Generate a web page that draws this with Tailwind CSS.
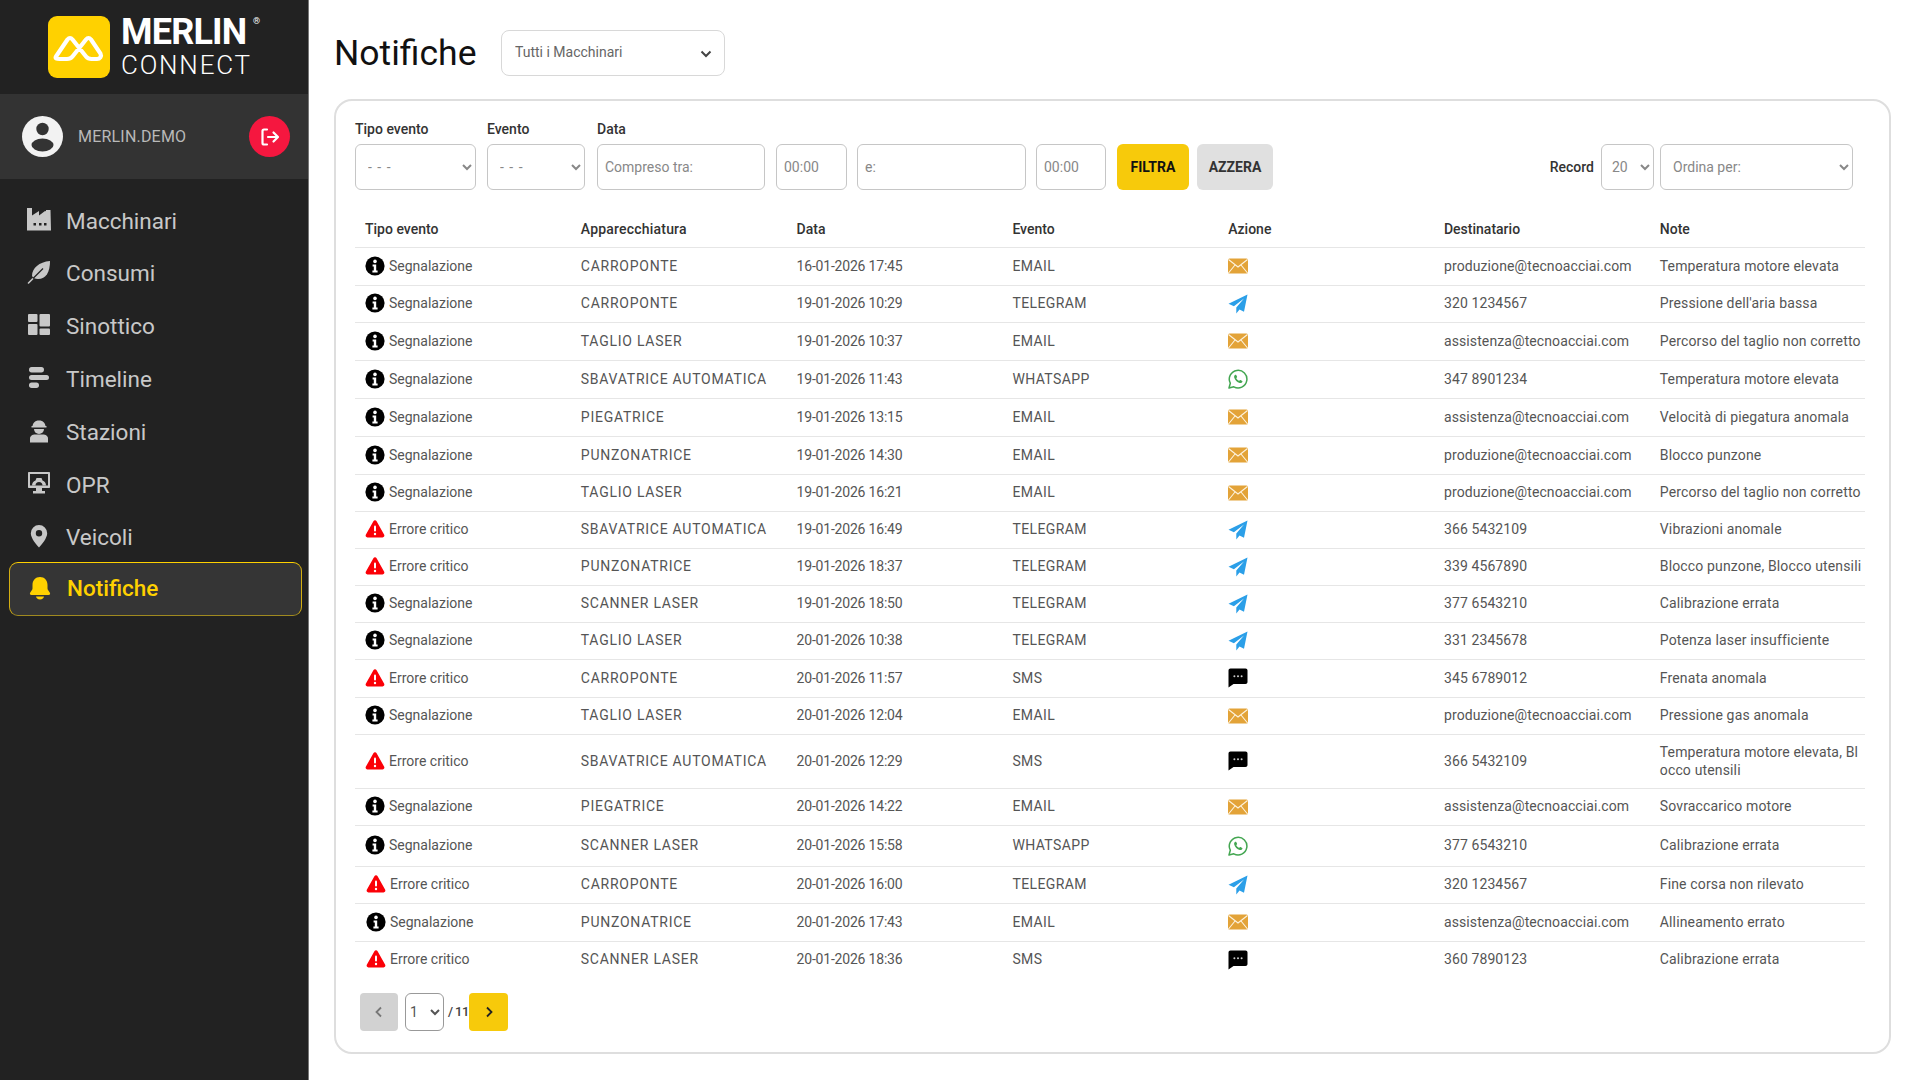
<!DOCTYPE html>
<html lang="it">
<head>
  <meta charset="UTF-8" />
  <title>Merlin Connect - Notifiche</title>
  <script src="https://cdn.jsdelivr.net/npm/@tailwindcss/browser@4"></script>
</head>
<body class="bg-white text-[#555] h-screen overflow-hidden flex font-['Roboto',sans-serif]">

  <!-- icone tabella -->
  <svg class="hidden">
    <symbol id="i-info" viewBox="0 0 20 20"><circle cx="10" cy="10" r="9.6" fill="#000"/><circle cx="10" cy="5.4" r="1.8" fill="#fff"/><path d="M7.6 8.4h3.6v6h1.4v2H7.4v-2h1.4v-4H7.6z" fill="#fff"/></symbol>
    <symbol id="i-alert" viewBox="0 0 20 20"><path d="M10 1.2c.7 0 1.3.4 1.6 1l7.6 13.6c.6 1.1-.2 2.6-1.6 2.6H2.4c-1.4 0-2.2-1.5-1.6-2.6L8.400 2.200c.3-.6.9-1 1.600-1z" fill="#fb0007"/><rect x="9" y="6.500" width="2" height="6" rx="1" fill="#fff"/><circle cx="10" cy="15" r="1.200" fill="#fff"/></symbol>
    <symbol id="i-mail" viewBox="0 0 20 20"><rect x="0" y="2.500" width="20" height="15" rx="1.500" fill="#e3a338"/><path d="M.5 3.500l9.500 7.500 9.500-7.500M.5 17l6.500-8M19.500 17l-6.500-8" fill="none" stroke="#fdf3df" stroke-width="1.100"/></symbol>
    <symbol id="i-tg" viewBox="0 0 20 20"><path d="M19.500 .5 .5 9.800l5.400 2.400L16 4.500 8.300 13.600v5.900l3.200-4.100 4.500 2.300z" fill="#2b9fe8"/></symbol>
    <symbol id="i-wa" viewBox="0 0 20 20"><path d="M1 19l1.300-4.800A8.800 8.800 0 1 1 5.800 17.800z" fill="none" stroke="#43a651" stroke-width="1.500" stroke-linejoin="round"/><path d="M7.300 5.800c-.9.500-1.400 1.500-1.100 2.700.6 2.500 3 4.900 5.500 5.500 1.200.3 2.300-.3 2.700-1.200.2-.4.100-.7-.2-.9l-1.700-.9c-.3-.1-.6 0-.8.200l-.6.700c-1.300-.5-2.300-1.500-2.900-2.800l.7-.7c.2-.2.300-.5.100-.8l-.8-1.700c-.2-.3-.6-.3-.9-.1z" fill="#43a651"/></symbol>
    <symbol id="i-sms" viewBox="0 0 20 20"><path d="M2.500 .5h15c1.200 0 2 .8 2 2v11.500c0 1.200-.8 2-2 2H5.500L.5 19.500V2.500c0-1.200.8-2 2-2z" fill="#000"/><circle cx="6.400" cy="8.300" r="1" fill="#ccc"/><circle cx="10" cy="8.300" r="1" fill="#ccc"/><circle cx="13.600" cy="8.300" r="1" fill="#ccc"/></symbol>
  </svg>

  <aside class="w-[309px] shrink-0 h-full bg-[#222222] border-r border-[#777] flex flex-col">
    <div class="h-[94px] flex items-center pl-[48px] gap-[11px]">
      <svg class="w-[62px] h-[62px] shrink-0" viewBox="0 0 62 62"><rect width="62" height="62" rx="9" fill="#ffd100"/><path d="M8 40.500 19.500 23.500q2.500-3 5 0L38 40.500q2 2.500 5.500 2.500H49c3 0 4.800-2.800 3.500-5.300L43 23.500q-2.500-3-5 0L24.500 40.500q-2 2.500-5.500 2.500h-7.500C8.500 43 6.800 42.500 8 40.500z" fill="none" stroke="#fff" stroke-width="4.200" stroke-linejoin="round"/></svg>
      <div class="text-white w-[140px] mt-[-3px]">
        <div class="relative text-[36px] leading-[38px] font-bold tracking-[-0.8px]">MERLIN<span class="absolute left-[132px] top-[3px] text-[9px] leading-[10px] font-normal tracking-normal">®</span></div>
        <div class="text-[26px] leading-[28px] font-light tracking-[1.8px]">CONNECT</div>
      </div>
    </div>

    <div class="h-[85px] bg-[#333333] flex items-center pl-[22px] pr-[18px]">
      <svg class="w-[41px] h-[41px] shrink-0" viewBox="0 0 41 41"><circle cx="20.500" cy="20.500" r="20.500" fill="#f2f2f2"/><circle cx="20.500" cy="13" r="6.200" fill="#333"/><ellipse cx="20.500" cy="29" rx="11" ry="6.500" fill="#333"/></svg>
      <span class="ml-[15px] text-[16px] text-[#b9b9b9] tracking-[0.2px]">MERLIN.DEMO</span>
      <span class="ml-auto w-[41px] h-[41px] rounded-full bg-[#f5173f] flex items-center justify-center">
        <svg class="w-[20px] h-[20px]" viewBox="0 0 20 20" fill="none" stroke="#fff" stroke-width="2.200" stroke-linecap="round" stroke-linejoin="round"><path d="M7 2.500H4a1.500 1.500 0 0 0-1.500 1.500v12A1.500 1.500 0 0 0 4 17.500h3M8 10h9.500M13.500 5.500l4.500 4.500-4.500 4.500"/></svg>
      </span>
    </div>

    <nav class="pt-[16px] flex flex-col text-[22.5px] text-[#c8c8c8]">
      <a class="h-[52.8px] flex items-center pl-[27px] gap-[15px]">
        <svg class="w-[24px] h-[24px] mb-[4px]" viewBox="0 0 24 24" fill="#c8c8c8"><path fill-rule="evenodd" d="M0 1h5v7.500L12 4v4.500L18 4l1 .3V3h4.500L24 23.500H0zM12 16h2.500v2.500H12zM17 16h2.500v2.500H17z M6.500 16H9v2.500H6.500z"/></svg>
        <span>Macchinari</span>
      </a>
      <a class="h-[52.8px] flex items-center pl-[27px] gap-[15px]">
        <svg class="w-[24px] h-[24px] mb-[4px]" viewBox="0 0 24 24"><path d="M23 1C23 12 19 19 11 19 8 19 6 18 5 16 5 8 12 2 23 1z" fill="#c8c8c8"/><path d="M1.500 23 6 18.500" stroke="#c8c8c8" stroke-width="1.600" stroke-linecap="round"/><path d="M6 18.500 16 8.500" stroke="#222" stroke-width="1.200"/></svg>
        <span>Consumi</span>
      </a>
      <a class="h-[52.8px] flex items-center pl-[27px] gap-[15px]">
        <svg class="w-[24px] h-[24px] mb-[4px]" viewBox="0 0 24 24" fill="#c8c8c8"><rect x="1" y="1" width="9.500" height="8" rx="1"/><rect x="1" y="11" width="9.500" height="11" rx="1"/><rect x="12.500" y="1" width="10.500" height="12.500" rx="1"/><rect x="12.500" y="15.500" width="10.500" height="6.500" rx="1"/></svg>
        <span>Sinottico</span>
      </a>
      <a class="h-[52.8px] flex items-center pl-[27px] gap-[15px]">
        <svg class="w-[24px] h-[24px] mb-[4px]" viewBox="0 0 24 24" fill="#c8c8c8"><rect x="2" y="1" width="15" height="5.500" rx="2.700"/><rect x="2" y="9" width="20" height="5" rx="2.500"/><rect x="2" y="16.500" width="10" height="5.500" rx="2.700"/></svg>
        <span>Timeline</span>
      </a>
      <a class="h-[52.8px] flex items-center pl-[27px] gap-[15px]">
        <svg class="w-[24px] h-[24px] mb-[4px]" viewBox="0 0 24 24" fill="#c8c8c8"><path d="M5.500 7a6.500 6.500 0 0 1 5-5.500h3A6.500 6.500 0 0 1 18.500 7h1v1.500h-15V7z"/><path d="M7 10h10a5 5 0 0 1-10 0z"/><path d="M3 23.500v-4C3 17 5.500 15.500 8 15.500h8c2.500 0 5 1.500 5 4v4z"/></svg>
        <span>Stazioni</span>
      </a>
      <a class="h-[52.8px] flex items-center pl-[27px] gap-[15px]">
        <svg class="w-[24px] h-[24px] mb-[4px]" viewBox="0 0 24 24"><path fill="#c8c8c8" d="M2 1h20c.6 0 1 .4 1 1v14c0 .6-.4 1-1 1h-7v3h3v2.500H6V20h3v-3H2c-.6 0-1-.4-1-1V2c0-.6.4-1 1-1z"/><rect x="3" y="3" width="18" height="11.500" fill="#222"/><path fill="#c8c8c8" d="M5 14.500c0-2.500 1.500-4.500 3.500-5l1-2.500h5l1 2.500c2 .5 3.500 2.500 3.500 5h-3.500c0-2-1.300-3.500-3.500-3.500S8.500 12.500 8.500 14.500z"/></svg>
        <span>OPR</span>
      </a>
      <a class="h-[52.8px] flex items-center pl-[27px] gap-[15px]">
        <svg class="w-[24px] h-[24px] mb-[4px]" viewBox="0 0 24 24"><path fill="#c8c8c8" fill-rule="evenodd" d="M12 1a8.200 8.200 0 0 1 8.200 8.200c0 4.800-5.500 11.500-8.200 14.300C9.300 20.700 3.800 14 3.800 9.200A8.200 8.200 0 0 1 12 1zm0 5a3.200 3.200 0 1 0 0 6.400A3.200 3.200 0 0 0 12 6z"/></svg>
        <span>Veicoli</span>
      </a>
      <a class="h-[54px] w-[293px] ml-[9px] -mt-[3px] flex items-center pl-[18px] gap-[15px] rounded-[9px] border border-t-[#ffd100] border-x-[#d4ae12] border-b-[#a08a20] bg-[#353535] text-[#ffd100]">
        <svg class="w-[24px] h-[24px] mb-[2px]" viewBox="0 0 24 24" fill="#ffd100"><path d="M12 1c4.500 0 7.500 3.500 7.500 8v3.500c0 1.500 2 3 2.500 4.500.4 1.200-.3 2-1.500 2h-17c-1.200 0-1.900-.8-1.500-2 .5-1.500 2.500-3 2.500-4.500V9c0-4.500 3-8 7.500-8z"/><path d="M8 20.500h8c0 1.500-1.800 3-4 3s-4-1.500-4-3z"/></svg>
        <span class="font-medium">Notifiche</span>
      </a>
    </nav>
  </aside>

  <main class="flex-1 pl-[25px]">
    <div class="h-[45px] mt-[30px] mb-[24px] flex items-center">
      <h1 class="text-[35.5px] font-normal text-[#111] w-[167px] pt-[2px]">Notifiche</h1>
      <div class="relative w-[224px] h-[46px]">
        <select class="appearance-none w-full h-full pl-[13px] text-[14px] text-[#666] border border-[#d8d8d8] rounded-[8px]">
          <option>Tutti i Macchinari</option>
        </select>
        <svg class="absolute right-[13px] top-[18px] w-[12px] h-[12px]" viewBox="0 0 12 12" fill="none" stroke="#444" stroke-width="2"><path d="M1.500 3.500 6 8l4.500-4.500"/></svg>
      </div>
    </div>

    <section class="w-[1557px] h-[955px] border-2 border-[#dedede] rounded-[18px] pl-[19px] pt-[17px]">
      <div class="flex items-end pr-[36px] text-[14px]">
        <div class="w-[121px] mr-[11px]">
          <label class="block h-[20px] pt-[1px] mb-[6px] leading-[20px] font-medium text-[#333]">Tipo evento</label>
          <select class="w-full h-[46px] pl-[8px] tracking-[1px] text-[#888] border border-[#c6c6c6] rounded-[6px]"><option>- - -</option></select>
        </div>
        <div class="w-[98px] mr-[12px]">
          <label class="block h-[20px] pt-[1px] mb-[6px] leading-[20px] font-medium text-[#333]">Evento</label>
          <select class="w-full h-[46px] pl-[8px] tracking-[1px] text-[#888] border border-[#c6c6c6] rounded-[6px]"><option>- - -</option></select>
        </div>
        <div class="w-[168px] mr-[11px]">
          <label class="block h-[20px] pt-[1px] mb-[6px] leading-[20px] font-medium text-[#333]">Data</label>
          <input class="w-full h-[46px] px-[7px] border border-[#c6c6c6] rounded-[6px] placeholder:text-[#888]" placeholder="Compreso tra:" />
        </div>
        <input class="w-[71px] h-[46px] px-[7px] mr-[10px] border border-[#c6c6c6] rounded-[6px] placeholder:text-[#888]" placeholder="00:00" />
        <input class="w-[169px] h-[46px] px-[7px] mr-[10px] border border-[#c6c6c6] rounded-[6px] placeholder:text-[#888]" placeholder="e:" />
        <input class="w-[70px] h-[46px] px-[7px] mr-[11px] border border-[#c6c6c6] rounded-[6px] placeholder:text-[#888]" placeholder="00:00" />
        <button class="w-[72px] h-[46px] mr-[8px] bg-[#f7ca0b] text-[#111] font-bold rounded-[6px]">FILTRA</button>
        <button class="w-[76px] h-[46px] bg-[#e0e0e0] text-[#333] font-bold rounded-[6px]">AZZERA</button>
        <span class="ml-auto mr-[7px] h-[46px] leading-[46px] font-medium text-[#333]">Record</span>
        <select class="w-[53px] h-[46px] pl-[6px] mr-[6px] text-[#888] border border-[#c6c6c6] rounded-[6px]"><option>20</option></select>
        <select class="w-[193px] h-[46px] pl-[8px] text-[#888] border border-[#c6c6c6] rounded-[6px]"><option>Ordina per:</option></select>
      </div>

      <table class="mt-[23px] w-[1510px] table-fixed text-[14px] text-left">
        <thead>
          <tr class="h-[34px] border-b border-[#e6e6e6] text-[#333]">
            <th class="w-[215.8px] pl-[10px] font-medium">Tipo evento</th>
            <th class="w-[215.8px] pl-[10px] font-medium tracking-[0.2px]">Apparecchiatura</th>
            <th class="w-[215.8px] pl-[10px] font-medium">Data</th>
            <th class="w-[215.8px] pl-[10px] font-medium">Evento</th>
            <th class="w-[215.8px] pl-[10px] font-medium">Azione</th>
            <th class="w-[215.8px] pl-[10px] font-medium">Destinatario</th>
            <th class="pl-[10px] font-medium">Note</th>
          </tr>
        </thead>
        <tbody class="[&_td]:pl-[10px] [&_td]:whitespace-nowrap [&_tr]:border-b [&_tr]:border-[#e6e6e6] [&_tr:last-child]:border-0 [&_td:nth-child(2)]:tracking-[0.75px] [&_td:nth-child(3)]:tracking-[-0.2px] [&_td:nth-child(4)]:tracking-[0.4px] [&_td:nth-child(6)]:tracking-[0.1px] [&_td:nth-child(7)]:tracking-[0.15px]">
          <tr class="h-[38px]"><td><svg class="inline w-[20px] h-[20px] mr-[4px] align-[-5px]"><use href="#i-info"/></svg>Segnalazione</td><td>CARROPONTE</td><td>16-01-2026 17:45</td><td>EMAIL</td><td><svg class="w-[20px] h-[20px]"><use href="#i-mail"/></svg></td><td>produzione@tecnoacciai.com</td><td>Temperatura motore elevata</td></tr>
          <tr class="h-[37px]"><td><svg class="inline w-[20px] h-[20px] mr-[4px] align-[-5px]"><use href="#i-info"/></svg>Segnalazione</td><td>CARROPONTE</td><td>19-01-2026 10:29</td><td>TELEGRAM</td><td><svg class="w-[20px] h-[20px]"><use href="#i-tg"/></svg></td><td>320 1234567</td><td>Pressione dell'aria bassa</td></tr>
          <tr class="h-[38px]"><td><svg class="inline w-[20px] h-[20px] mr-[4px] align-[-5px]"><use href="#i-info"/></svg>Segnalazione</td><td>TAGLIO LASER</td><td>19-01-2026 10:37</td><td>EMAIL</td><td><svg class="w-[20px] h-[20px]"><use href="#i-mail"/></svg></td><td>assistenza@tecnoacciai.com</td><td>Percorso del taglio non corretto</td></tr>
          <tr class="h-[38px]"><td><svg class="inline w-[20px] h-[20px] mr-[4px] align-[-5px]"><use href="#i-info"/></svg>Segnalazione</td><td>SBAVATRICE AUTOMATICA</td><td>19-01-2026 11:43</td><td>WHATSAPP</td><td><svg class="w-[20px] h-[20px]"><use href="#i-wa"/></svg></td><td>347 8901234</td><td>Temperatura motore elevata</td></tr>
          <tr class="h-[38px]"><td><svg class="inline w-[20px] h-[20px] mr-[4px] align-[-5px]"><use href="#i-info"/></svg>Segnalazione</td><td>PIEGATRICE</td><td>19-01-2026 13:15</td><td>EMAIL</td><td><svg class="w-[20px] h-[20px]"><use href="#i-mail"/></svg></td><td>assistenza@tecnoacciai.com</td><td>Velocità di piegatura anomala</td></tr>
          <tr class="h-[38px]"><td><svg class="inline w-[20px] h-[20px] mr-[4px] align-[-5px]"><use href="#i-info"/></svg>Segnalazione</td><td>PUNZONATRICE</td><td>19-01-2026 14:30</td><td>EMAIL</td><td><svg class="w-[20px] h-[20px]"><use href="#i-mail"/></svg></td><td>produzione@tecnoacciai.com</td><td>Blocco punzone</td></tr>
          <tr class="h-[37px]"><td><svg class="inline w-[20px] h-[20px] mr-[4px] align-[-5px]"><use href="#i-info"/></svg>Segnalazione</td><td>TAGLIO LASER</td><td>19-01-2026 16:21</td><td>EMAIL</td><td><svg class="w-[20px] h-[20px]"><use href="#i-mail"/></svg></td><td>produzione@tecnoacciai.com</td><td>Percorso del taglio non corretto</td></tr>
          <tr class="h-[37px]"><td><svg class="inline w-[20px] h-[20px] mr-[4px] align-[-5px]"><use href="#i-alert"/></svg>Errore critico</td><td>SBAVATRICE AUTOMATICA</td><td>19-01-2026 16:49</td><td>TELEGRAM</td><td><svg class="w-[20px] h-[20px]"><use href="#i-tg"/></svg></td><td>366 5432109</td><td>Vibrazioni anomale</td></tr>
          <tr class="h-[37px]"><td><svg class="inline w-[20px] h-[20px] mr-[4px] align-[-5px]"><use href="#i-alert"/></svg>Errore critico</td><td>PUNZONATRICE</td><td>19-01-2026 18:37</td><td>TELEGRAM</td><td><svg class="w-[20px] h-[20px]"><use href="#i-tg"/></svg></td><td>339 4567890</td><td>Blocco punzone, Blocco utensili</td></tr>
          <tr class="h-[37px]"><td><svg class="inline w-[20px] h-[20px] mr-[4px] align-[-5px]"><use href="#i-info"/></svg>Segnalazione</td><td>SCANNER LASER</td><td>19-01-2026 18:50</td><td>TELEGRAM</td><td><svg class="w-[20px] h-[20px]"><use href="#i-tg"/></svg></td><td>377 6543210</td><td>Calibrazione errata</td></tr>
          <tr class="h-[37px]"><td><svg class="inline w-[20px] h-[20px] mr-[4px] align-[-5px]"><use href="#i-info"/></svg>Segnalazione</td><td>TAGLIO LASER</td><td>20-01-2026 10:38</td><td>TELEGRAM</td><td><svg class="w-[20px] h-[20px]"><use href="#i-tg"/></svg></td><td>331 2345678</td><td>Potenza laser insufficiente</td></tr>
          <tr class="h-[38px]"><td><svg class="inline w-[20px] h-[20px] mr-[4px] align-[-5px]"><use href="#i-alert"/></svg>Errore critico</td><td>CARROPONTE</td><td>20-01-2026 11:57</td><td>SMS</td><td><svg class="w-[20px] h-[20px]"><use href="#i-sms"/></svg></td><td>345 6789012</td><td>Frenata anomala</td></tr>
          <tr class="h-[37px]"><td><svg class="inline w-[20px] h-[20px] mr-[4px] align-[-5px]"><use href="#i-info"/></svg>Segnalazione</td><td>TAGLIO LASER</td><td>20-01-2026 12:04</td><td>EMAIL</td><td><svg class="w-[20px] h-[20px]"><use href="#i-mail"/></svg></td><td>produzione@tecnoacciai.com</td><td>Pressione gas anomala</td></tr>
          <tr class="h-[54px]"><td><svg class="inline w-[20px] h-[20px] mr-[4px] align-[-5px]"><use href="#i-alert"/></svg>Errore critico</td><td>SBAVATRICE AUTOMATICA</td><td>20-01-2026 12:29</td><td>SMS</td><td><svg class="w-[20px] h-[20px]"><use href="#i-sms"/></svg></td><td>366 5432109</td><td class="leading-[18px]">Temperatura motore elevata, Bl<br>occo utensili</td></tr>
          <tr class="h-[37px]"><td><svg class="inline w-[20px] h-[20px] mr-[4px] align-[-5px]"><use href="#i-info"/></svg>Segnalazione</td><td>PIEGATRICE</td><td>20-01-2026 14:22</td><td>EMAIL</td><td><svg class="w-[20px] h-[20px]"><use href="#i-mail"/></svg></td><td>assistenza@tecnoacciai.com</td><td>Sovraccarico motore</td></tr>
          <tr class="h-[41px]"><td><svg class="inline w-[20px] h-[20px] mr-[4px] align-[-5px]"><use href="#i-info"/></svg>Segnalazione</td><td>SCANNER LASER</td><td>20-01-2026 15:58</td><td>WHATSAPP</td><td><svg class="w-[20px] h-[20px]"><use href="#i-wa"/></svg></td><td>377 6543210</td><td>Calibrazione errata</td></tr>
          <tr class="h-[37px]"><td><svg class="inline w-[20px] h-[20px] ml-[1px] mr-[4px] align-[-5px]"><use href="#i-alert"/></svg>Errore critico</td><td>CARROPONTE</td><td>20-01-2026 16:00</td><td>TELEGRAM</td><td><svg class="w-[20px] h-[20px]"><use href="#i-tg"/></svg></td><td>320 1234567</td><td>Fine corsa non rilevato</td></tr>
          <tr class="h-[38px]"><td><svg class="inline w-[20px] h-[20px] ml-[1px] mr-[4px] align-[-5px]"><use href="#i-info"/></svg>Segnalazione</td><td>PUNZONATRICE</td><td>20-01-2026 17:43</td><td>EMAIL</td><td><svg class="w-[20px] h-[20px]"><use href="#i-mail"/></svg></td><td>assistenza@tecnoacciai.com</td><td>Allineamento errato</td></tr>
          <tr class="h-[37px]"><td><svg class="inline w-[20px] h-[20px] ml-[1px] mr-[4px] align-[-5px]"><use href="#i-alert"/></svg>Errore critico</td><td>SCANNER LASER</td><td>20-01-2026 18:36</td><td>SMS</td><td><svg class="w-[20px] h-[20px]"><use href="#i-sms"/></svg></td><td>360 7890123</td><td>Calibrazione errata</td></tr>
        </tbody>
      </table>

      <div class="mt-[15px] ml-[5px] flex items-center text-[14px]">
        <button class="w-[38px] h-[38px] bg-[#d2d2d2] rounded-[4px] flex items-center justify-center">
          <svg class="w-[14px] h-[14px]" viewBox="0 0 14 14" fill="none" stroke="#777" stroke-width="1.800"><path d="M9 2.500 4.500 7 9 11.500"/></svg>
        </button>
        <select class="ml-[7px] w-[39px] h-[38px] text-[#555] border border-[#999] rounded-[6px]"><option>1</option></select>
        <span class="ml-[4px] w-[21px] whitespace-nowrap text-[13px] tracking-[-0.6px] text-[#444] font-medium">/ 11</span>
        <button class="w-[39px] h-[38px] bg-[#f7ca0b] rounded-[4px] flex items-center justify-center">
          <svg class="w-[14px] h-[14px]" viewBox="0 0 14 14" fill="none" stroke="#222" stroke-width="1.800"><path d="M5 2.500 9.500 7 5 11.500"/></svg>
        </button>
      </div>
    </section>
  </main>

</body>
</html>
